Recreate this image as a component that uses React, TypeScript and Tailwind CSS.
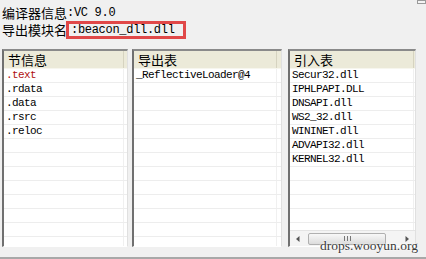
const cjk = { fontFamily: '"Noto Sans CJK SC", sans-serif' };

const Arrow = ({ left }: { left?: boolean }) => (
  <svg width="12" height="10" viewBox="0 0 12 10">
    <path d={left ? 'M7.5 2 L4 5 L7.5 8 Z' : 'M4.5 2 L8 5 L4.5 8 Z'} fill="#555" />
  </svg>
);

const Panel = ({
  title,
  items,
  width,
  colWidth,
  scroll,
}: {
  title: string;
  items: { text: string; red?: boolean }[];
  width: string;
  colWidth: string;
  scroll?: boolean;
}) => {
  const rows = Array.from({ length: 13 }, (_, i) => items[i]);
  return (
    <div
      className={`${width} h-[198px] flex flex-col border-l-2 border-t-2 border-l-[#707070] border-t-[#8a8a8a] border-r border-b border-r-[#e0e0e0] border-b-[#ffffff] bg-white overflow-hidden`}
    >
      <div className="h-[18px] shrink-0 flex bg-[#ecead9] border-b border-[#f7f6ee]">
        <div
          className={`${colWidth} h-full flex items-center pl-[4px] text-[13px] text-black border-r border-[#d6d3c0]`}
          style={cjk}
        >
          {title}
        </div>
        <div className="flex-1" />
      </div>
      <div className="flex-1 flex flex-col overflow-hidden">
        {rows.map((r, i) => (
          <div key={i} className="h-[14px] shrink-0 flex border-b border-[#ededed]">
            <div
              className={`${colWidth} h-full flex items-center pl-[2px] font-['Liberation_Mono',monospace] text-[11px] tracking-[-0.6px] leading-none border-r border-[#f0f0f0] ${
                r?.red ? 'text-[#b01010]' : 'text-black'
              }`}
            >
              {r?.text}
            </div>
          </div>
        ))}
      </div>
      {scroll && (
        <div className="h-[16px] shrink-0 flex items-center bg-[#f4f4f4] border-t border-[#e4e4e4] px-[2px] gap-[4px]">
          <Arrow left />
          <div className="w-[78px] h-[12px] rounded-[2px] border border-[#b0b0b0] bg-gradient-to-b from-[#f8f8f8] to-[#dcdcdc] flex items-center justify-center">
            <div className="flex gap-[2px]">
              <div className="w-px h-[5px] bg-[#777]" />
              <div className="w-px h-[5px] bg-[#777]" />
              <div className="w-px h-[5px] bg-[#777]" />
            </div>
          </div>
          <div className="flex-1" />
          <Arrow />
        </div>
      )}
    </div>
  );
};

const App = () => {
  return (
    <div className="relative w-[426px] h-[259px] bg-[#f0f0f0] overflow-hidden flex flex-col border-b-2 border-[#a8a8a8]">
      <div className="pt-[4px] pl-[2px] flex">
        <div className="h-[17px] flex items-center text-[13px] text-black">
          <span style={cjk}>编译器信息</span>
          <span className="font-['Liberation_Mono',monospace] text-[12px] tracking-[-0.3px]">:VC 9.0</span>
        </div>
        <div className="flex-1" />
        <div className="w-[9px] h-[4px] -mt-[4px] border border-[#9a9a9a] bg-[#f4f4f4]" />
      </div>
      <div className="pl-[2px] h-[18px] flex items-center text-[13px] text-black">
        <span style={cjk}>导出模块名</span>
        <span className="h-full w-[120px] -ml-[1px] flex items-center pl-[2px] border-[3px] border-[#e04848] font-['Liberation_Mono',monospace] text-[12px] tracking-[-0.3px]">
          :beacon_dll.dll
        </span>
      </div>
      <div className="mt-[10px] pl-[2px] flex">
        <Panel
          title="节信息"
          width="w-[126px]"
          colWidth="w-[120px]"
          items={[
            { text: '.text', red: true },
            { text: '.rdata' },
            { text: '.data' },
            { text: '.rsrc' },
            { text: '.reloc' },
          ]}
        />
        <div className="w-[4px]" />
        <Panel
          title="导出表"
          width="w-[150px]"
          colWidth="w-[143px]"
          items={[{ text: '_ReflectiveLoader@4' }]}
        />
        <div className="w-[6px]" />
        <Panel
          title="引入表"
          width="w-[128px]"
          colWidth="w-[124px]"
          scroll
          items={[
            { text: 'Secur32.dll' },
            { text: 'IPHLPAPI.DLL' },
            { text: 'DNSAPI.dll' },
            { text: 'WS2_32.dll' },
            { text: 'WININET.dll' },
            { text: 'ADVAPI32.dll' },
            { text: 'KERNEL32.dll' },
          ]}
        />
      </div>
      <div className="absolute left-[320px] top-[236px] font-['Liberation_Serif',serif] text-[13.5px] text-[#3a3a3a] [text-shadow:0_0_2px_#ffffff,0_0_2px_#ffffff]">
        drops.wooyun.org
      </div>
    </div>
  );
};

export default App;
